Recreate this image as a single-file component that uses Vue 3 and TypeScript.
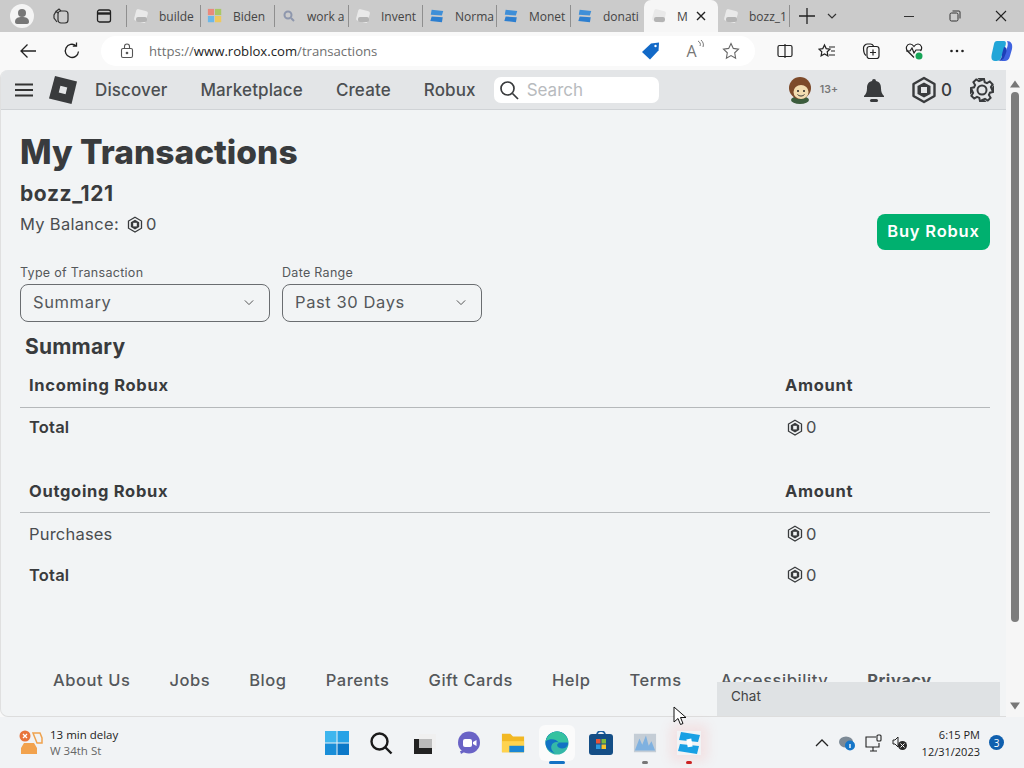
<script setup lang="ts">
const tabs = [
  { label: 'builde', kind: 'gray' },
  { label: 'Biden', kind: 'ms' },
  { label: 'work a', kind: 'search' },
  { label: 'Invent', kind: 'gray' },
  { label: 'Norma', kind: 'blue' },
  { label: 'Monet', kind: 'blue' },
  { label: 'donati', kind: 'blue' },
  { label: 'M', kind: 'gray', active: true },
  { label: 'bozz_1', kind: 'gray' },
]
const navItems = ['Discover', 'Marketplace', 'Create', 'Robux']
const footerLinks = ['About Us', 'Jobs', 'Blog', 'Parents', 'Gift Cards', 'Help', 'Terms', 'Accessibility', 'Privacy']
const sections = [
  { title: 'Incoming Robux', rows: [{ name: 'Total', strong: true }] },
  { title: 'Outgoing Robux', rows: [{ name: 'Purchases', strong: false }, { name: 'Total', strong: true }] },
]
</script>

<template>
  <div class="screen">
    <div class="tabstrip">
      <div class="profile">
        <svg width="30" height="30" viewBox="0 0 30 30"><circle cx="15" cy="15" r="12" fill="#f4f4f4"/><circle cx="15" cy="12" r="4" fill="#777"/><path d="M8 21c0-4 3-5 7-5s7 1 7 5c0 1-1 2-2 2H10c-1 0-2-1-2-2z" fill="#777"/></svg>
      </div>
      <svg class="chrome-ic first" width="20" height="20" viewBox="0 0 20 20" fill="none" stroke="#333" stroke-width="1.2"><rect x="7" y="5" width="10" height="12" rx="3"/><path d="M7 7 5 5.500 3 9v3l3 4M10 5 8 3 5 5.500"/></svg>
      <svg class="chrome-ic second" width="16" height="16" viewBox="0 0 16 16" fill="none" stroke="#222" stroke-width="1.3"><rect x="1.500" y="2" width="13" height="12" rx="2"/><path d="M1.500 5.500h13" stroke-width="2.400"/></svg>
      <div
        v-for="t in tabs"
        :key="t.label"
        class="tab"
        :class="{ active: t.active }"
      >
        <svg v-if="t.kind === 'gray'" class="fav" width="16" height="16" viewBox="0 0 16 16"><rect x="2" y="2" width="12" height="12" rx="2" fill="#e9e9e9" transform="rotate(15 8 8)"/><rect x="3" y="9" width="11" height="5" rx="2" fill="#b4b4b4"/></svg>
        <svg v-else-if="t.kind === 'ms'" class="fav" width="16" height="16" viewBox="0 0 18 18"><rect x="1" y="1" width="7" height="7" fill="#e98a7c"/><rect x="9" y="1" width="7" height="7" fill="#a9c766"/><rect x="1" y="9" width="7" height="7" fill="#6cb8e8"/><rect x="9" y="9" width="7" height="7" fill="#eec85e"/></svg>
        <svg v-else-if="t.kind === 'search'" class="fav" width="16" height="16" viewBox="0 0 16 16" fill="none" stroke="#8e97ad" stroke-width="2"><circle cx="7" cy="7" r="3.500"/><path d="m10 10 3 3"/></svg>
        <svg v-else class="fav" width="16" height="16" viewBox="0 0 18 18"><path d="M3 2 16 3.500 14.500 8.500 2 7.500z" fill="#3f8fd8"/><path d="M3 9.500 15.500 10.500 14.500 16 1.500 14.500z" fill="#2d7fd0"/></svg>
        <span class="tab-label">{{ t.label }}</span>
        <svg v-if="t.active" class="tab-close" width="12" height="12" viewBox="0 0 12 12" stroke="#222" stroke-width="1.400"><path d="m2 2 8 8M10 2l-8 8"/></svg>
      </div>
      <svg class="plus" width="18" height="18" viewBox="0 0 18 18" stroke="#222" stroke-width="1.300"><path d="M9 1v16M1 9h16"/></svg>
      <svg class="chev" width="12" height="12" viewBox="0 0 12 12" fill="none" stroke="#333" stroke-width="1.200"><path d="m2 4 4 4 4-4"/></svg>
      <div class="winbtns">
        <svg width="12" height="12" viewBox="0 0 12 12" stroke="#333"><path d="M1 6.500h10"/></svg>
        <svg width="12" height="12" viewBox="0 0 12 12" fill="none" stroke="#333"><rect x="1" y="3" width="8" height="8" rx="1.500"/><path d="M3.500 1H10a1 1 0 0 1 1 1v6.500"/></svg>
        <svg width="12" height="12" viewBox="0 0 12 12" stroke="#222" stroke-width="1.100"><path d="m1 1 10 10M11 1 1 11"/></svg>
      </div>
    </div>

    <div class="addressbar">
      <svg class="back" width="18" height="18" viewBox="0 0 18 18" fill="none" stroke="#222" stroke-width="1.300"><path d="M17 9H2M8.500 2.500 2 9l6.500 6.500"/></svg>
      <svg class="reload" width="18" height="18" viewBox="0 0 18 18" fill="none" stroke="#222" stroke-width="1.300"><path d="M15.500 9.500A6.600 6.600 0 1 1 13 3.700M13.500 0.500v3.700H9.800"/></svg>
      <div class="urlbox">
        <svg class="lock" width="14" height="16" viewBox="0 0 14 16" fill="none" stroke="#555" stroke-width="1.100"><rect x="1.500" y="5.500" width="11" height="9" rx="1.500"/><path d="M4.500 5.500V3.500a2.500 2.500 0 0 1 5 0v2"/><circle cx="7" cy="10" r=".8" fill="#555"/></svg>
        <span class="url"><span class="dim">https://</span>www.roblox.com<span class="dim">/transactions</span></span>
        <svg class="tag" width="20" height="20" viewBox="0 0 20 20"><path d="M1 11 10 2.500 18 1.500 17.500 9.500 9 18.500z" fill="#1269c7"/><circle cx="14.500" cy="5" r="1.200" fill="#fff"/></svg>
        <span class="readaloud">A<svg width="8" height="9" viewBox="0 0 8 9" fill="none" stroke="#777"><path d="M1 1c2 1 3 3 2 5M4 0c2 2 3 4 2 7"/></svg></span>
        <svg class="star" width="18" height="18" viewBox="0 0 18 18" fill="none" stroke="#666" stroke-width="1.100"><path d="m9 1.500 2.300 4.900 5.200.7-3.800 3.700.9 5.400L9 13.600l-4.600 2.600.9-5.400L1.500 7.100l5.200-.7z"/></svg>
      </div>
      <div class="tools">
        <svg width="16" height="16" viewBox="0 0 16 16" fill="none" stroke="#222" stroke-width="1.200"><rect x="1" y="2.500" width="14" height="11" rx="1.500"/><path d="M8 1v14" /></svg>
        <svg width="18" height="18" viewBox="0 0 18 18" fill="none" stroke="#222" stroke-width="1.200"><path d="m6.500 3 1.700 3.600 3.800.5-2.800 2.700.7 4-3.400-1.900-3.400 1.900.7-4L1 7.100l3.800-.5zM11 5h6M13 9h4M11 13h6"/></svg>
        <svg width="18" height="18" viewBox="0 0 18 18" fill="none" stroke="#222" stroke-width="1.200"><rect x="5" y="4.500" width="12" height="12" rx="2.500"/><path d="M11 7.500v6M8 10.500h6M4 13.500C2 12 1.500 8 1.500 6c0-2 2-4 4-4h3c1.500 0 2.500 1 3 2"/></svg>
        <svg width="18" height="18" viewBox="0 0 18 18" fill="none" stroke="#222" stroke-width="1.200"><path d="M9 15.500 2.500 9C0 6 2 2 5 2c2 0 3 1 4 2.500C10 3 11 2 13 2c3 0 5 4 2.500 7"/><path d="M1 9h4l2-3 2 5 2-3h5"/><circle cx="14" cy="14" r="3.500" fill="#18a558" stroke="none"/></svg>
        <svg width="16" height="16" viewBox="0 0 16 16" fill="#222"><circle cx="2.500" cy="8" r="1.300"/><circle cx="8" cy="8" r="1.300"/><circle cx="13.500" cy="8" r="1.300"/></svg>
        <svg width="24" height="24" viewBox="0 0 24 24"><path d="M7 2h7c3 0 2 4 0 9l-3 8c-1 3-4 3-6 3-4 0-4-4-3-8l2-9c.3-2 1.500-3 3-3z" fill="#22a6d8"/><path d="M17 2c4 0 6 3 5 8l-2 7c-1 4-3 5-6 5H9c3 0 4-2 5-5l3-8c1-3 1-5 0-7z" fill="#3f63e0"/><path d="M14 8c3 0 3 3 2 6l-2 5c-1 2-3 3-5 3 2-2 3-4 3-7z" fill="#1d3fb8"/></svg>
      </div>
    </div>

    <div class="viewport">
      <div class="page">
        <nav class="topnav">
          <svg class="burger" width="18" height="14" viewBox="0 0 18 14" fill="#333"><rect y="0.500" width="18" height="2" /><rect y="6" width="18" height="2"/><rect y="11.500" width="18" height="2"/></svg>
          <svg class="logo" width="32" height="32" viewBox="0 0 32 32"><path d="M8 2 30 7.500 24.500 30 2 24.500z" fill="#393b3d"/><rect x="12.500" y="12.500" width="7" height="7" fill="#e3e5e7" transform="rotate(14 16 16)"/></svg>
          <a v-for="n in navItems" :key="n" class="navlink">{{ n }}</a>
          <div class="search">
            <svg width="20" height="20" viewBox="0 0 20 20" fill="none" stroke="#393b3d" stroke-width="1.700"><circle cx="8.500" cy="8.500" r="6.500"/><path d="m13.500 13.500 5.500 5.500"/></svg>
            <span>Search</span>
          </div>
          <div class="nav-right">
            <svg class="avatar" width="28" height="28" viewBox="0 0 28 28"><ellipse cx="14" cy="24" rx="9" ry="4" fill="#3c5c3c"/><circle cx="14" cy="12" r="11" fill="#7d4a2a"/><ellipse cx="15" cy="16" rx="7.500" ry="7" fill="#f2dcb0"/><circle cx="12" cy="15" r="1" fill="#222"/><circle cx="18" cy="15" r="1" fill="#222"/><path d="M11.500 18.500c2 2 5 2 7 0" stroke="#333" fill="none"/></svg>
            <span class="age">13+</span>
            <svg class="bell" width="22" height="24" viewBox="0 0 22 24" fill="#393b3d"><path d="M11 1a2 2 0 0 1 2 2c4 1 5 4 5 7 0 4 1 6 3 8v1H1v-1c2-2 3-4 3-8 0-3 1-6 5-7a2 2 0 0 1 2-2z"/><rect x="7" y="21" width="8" height="3" rx="1.500"/></svg>
            <svg class="robux-lg" width="26" height="28" viewBox="0 0 26 28" fill="none"><path d="M13 2 23.500 8v12L13 26 2.500 20V8z" stroke="#393b3d" stroke-width="2.400" stroke-linejoin="round"/><path d="M13 6.500 19.500 10v8L13 21.500 6.500 18v-8z" fill="#393b3d"/><rect x="10" y="11" width="6" height="6" fill="#e3e5e7"/></svg>
            <span class="bal">0</span>
            <svg class="gear" width="26" height="26" viewBox="0 0 26 26" fill="none" stroke="#393b3d" stroke-width="2"><circle cx="13" cy="13" r="4.500"/><path d="M11 2h4l.7 3.200 2.300 1 2.800-1.700 2.800 2.800-1.700 2.800 1 2.300L24 11v4l-3.100.7-1 2.300 1.700 2.800-2.800 2.800-2.800-1.700-2.300 1L15 24h-4l-.7-3.100-2.300-1-2.800 1.700-2.800-2.800L4.100 16l-1-2.300L2 15v-4l3.100-.7 1-2.300-1.700-2.800 2.800-2.800 2.800 1.700 2.300-1z"/></svg>
          </div>
        </nav>

        <main class="content">
          <h1>My Transactions</h1>
          <div class="summary-top">
            <div>
              <div class="user">bozz_121</div>
              <div class="balance">
                My Balance:
                <span class="amount">
                  <svg class="rbx" width="16" height="17" viewBox="0 0 16 17" fill="none"><path d="M8 1.200 14.500 5v7.200L8 16 1.500 12.200V5z" stroke="#393b3d" stroke-width="1.300"/><path d="M8 3.800 12.200 6.200v4.800L8 13.400 3.800 11V6.200z" fill="#393b3d"/><rect x="6.200" y="6.800" width="3.600" height="3.600" fill="#f2f4f5"/></svg>
                  0
                </span>
              </div>
            </div>
            <button class="buy">Buy Robux</button>
          </div>

          <div class="filters">
            <div class="field type">
              <label>Type of Transaction</label>
              <div class="select"><span>Summary</span><svg width="10" height="7" viewBox="0 0 12 8" fill="none" stroke="#555" stroke-width="1.200"><path d="m1 1.500 5 5 5-5"/></svg></div>
            </div>
            <div class="field range">
              <label>Date Range</label>
              <div class="select"><span>Past 30 Days</span><svg width="10" height="7" viewBox="0 0 12 8" fill="none" stroke="#555" stroke-width="1.200"><path d="m1 1.500 5 5 5-5"/></svg></div>
            </div>
          </div>

          <h2>Summary</h2>
          <section v-for="s in sections" :key="s.title" class="tbl">
            <div class="row head"><span class="c1">{{ s.title }}</span><span class="c2">Amount</span></div>
            <div v-for="r in s.rows" :key="r.name" class="row">
              <span class="c1" :class="{ strong: r.strong }">{{ r.name }}</span>
              <span class="c2 amount cell-amount">
                <svg class="rbx" width="16" height="17" viewBox="0 0 16 17" fill="none"><path d="M8 1.200 14.500 5v7.200L8 16 1.500 12.200V5z" stroke="#393b3d" stroke-width="1.300"/><path d="M8 3.800 12.200 6.200v4.800L8 13.400 3.800 11V6.200z" fill="#393b3d"/><rect x="6.200" y="6.800" width="3.600" height="3.600" fill="#f2f4f5"/></svg>
                0
              </span>
            </div>
          </section>

          <footer class="foot">
            <a v-for="f in footerLinks" :key="f" :class="{ bold: f === 'Privacy' }">{{ f }}</a>
          </footer>
        </main>

        <div class="chat">Chat</div>
      </div>
      <div class="scrollbar">
        <svg width="10" height="8" viewBox="0 0 10 8" fill="#777"><path d="M5 0.500 10 7.500H0z"/></svg>
        <div class="thumb"></div>
        <svg width="10" height="8" viewBox="0 0 10 8" fill="#777"><path d="M5 7.500 0 0.500h10z"/></svg>
      </div>
    </div>

    <div class="taskbar">
      <div class="traffic">
        <svg width="26" height="28" viewBox="0 0 26 28"><circle cx="7" cy="7" r="5.500" fill="#e8743b"/><path d="m5 5 4 4M9 5l-4 4" stroke="#fff" stroke-width="1.300"/><path d="M15 4h7l2 5v5h-5l-2-5z" fill="none" stroke="#efa24e" stroke-width="1.500"/><path d="M3 19l3-5h10l3 5v6H3z" fill="#f2a24d"/></svg>
        <div class="traffic-text"><span>13 min delay</span><span class="gray">W 34th St</span></div>
      </div>
      <div class="apps">
        <svg width="24" height="24" viewBox="0 0 24 24"><rect width="11.500" height="11.500" fill="#3fb6ee"/><rect x="12.500" width="11.500" height="11.500" fill="#28a2e6"/><rect y="12.500" width="11.500" height="11.500" fill="#1a8ed8"/><rect x="12.500" y="12.500" width="11.500" height="11.500" fill="#0c78c8"/></svg>
        <svg width="24" height="24" viewBox="0 0 24 24" fill="none" stroke="#1a1a1a" stroke-width="2.400"><circle cx="10.500" cy="10.500" r="8"/><path d="m16.500 16.500 6 6"/></svg>
        <svg width="24" height="24" viewBox="0 0 24 24"><rect x="6" y="3" width="17" height="15" fill="#f0f0f0"/><rect x="1" y="8" width="18" height="15" fill="#222"/><rect x="6" y="8" width="13" height="9" fill="#bbb"/></svg>
        <svg width="24" height="24" viewBox="0 0 24 24"><circle cx="12" cy="11.500" r="11" fill="#6a63c6"/><path d="M3 20h6l-5 3z" fill="#6a63c6"/><rect x="6" y="8" width="9" height="8" rx="2" fill="#fff"/><path d="m16 11 3.500-2v6L16 13z" fill="#fff"/></svg>
        <svg width="24" height="24" viewBox="0 0 26 24"><path d="M1 2h9l3 3h12v17H1z" fill="#f2b824"/><path d="M1 10h24v12H1z" fill="#ffd34e"/><path d="M9 15h16v7H9z" fill="#1a86d4"/></svg>
        <div class="app-cell current">
          <svg width="24" height="24" viewBox="0 0 26 26"><circle cx="13" cy="13" r="12.500" fill="#35b8a8"/><path d="M25 14c-1 5-7 6-10 4-3-2-2-5 1-5-3-2-8-1-9 3-1 3 1 7 4 8C5 23 .5 18 .5 13 .5 6 6 .5 13 .5c7 0 12 5 12 13.500z" fill="#1272c4"/><path d="M.8 11C2 5 7 .5 13 .5c7 0 12 6 12 12H15c-3-4-9-5-14.200-1.500z" fill="#35c2a0"/></svg>
          <i class="run blue"></i>
        </div>
        <svg width="24" height="24" viewBox="0 0 24 24"><path d="M8 4a4 4 0 0 1 8 0" fill="none" stroke="#1b5fa0" stroke-width="1.800"/><rect y="3" width="24" height="21" rx="3" fill="#144e86"/><rect x="7" y="8" width="4.500" height="4.500" fill="#e8553a"/><rect x="12.500" y="8" width="4.500" height="4.500" fill="#7cba3c"/><rect x="7" y="13.500" width="4.500" height="4.500" fill="#2b9ae0"/><rect x="12.500" y="13.500" width="4.500" height="4.500" fill="#f4c22c"/></svg>
        <div class="app-cell">
          <svg width="24" height="24" viewBox="0 0 26 24"><rect x="1" y="2" width="24" height="20" fill="#c4cdd6"/><path d="M2 20 7 7l3 7 4-10 3 11 3-5 4 10z" fill="#7fb1e0"/></svg>
          <i class="run gray"></i>
        </div>
        <div class="app-cell rbx-app">
          <svg width="24" height="24" viewBox="0 0 24 24"><path d="M4 1 23 4 21 11 2 9z" fill="#19a0e4"/><path d="M3 13 22 15 20 23 1 20z" fill="#19a0e4"/><rect x="10" y="8" width="5" height="8" fill="#fff" transform="rotate(-10 12 12)"/></svg>
          <i class="run red"></i>
        </div>
      </div>
      <div class="tray">
        <svg width="14" height="10" viewBox="0 0 14 10" fill="none" stroke="#222" stroke-width="1.300"><path d="m1 8 6-6 6 6"/></svg>
        <svg width="18" height="16" viewBox="0 0 18 16"><ellipse cx="8" cy="7" rx="7" ry="5.500" fill="#7d8a96"/><circle cx="12" cy="10.500" r="5" fill="#1676c8"/><rect x="11.300" y="9" width="1.400" height="4" fill="#fff"/></svg>
        <svg width="18" height="18" viewBox="0 0 18 18" fill="none" stroke="#222" stroke-width="1.100"><path d="M11 3H1v10h13V9M5 17h7M8 13v4"/><rect x="12" y="1" width="4" height="6" rx="1"/></svg>
        <svg width="16" height="16" viewBox="0 0 16 16"><path d="M1 5h2l3-3v10L3 9H1z" fill="none" stroke="#222"/><circle cx="10.500" cy="10.500" r="4.500" fill="#2a2a2a"/><path d="m8.500 8.500 4 4M12.500 8.500l-4 4" stroke="#fff"/></svg>
        <div class="clock"><span>6:15 PM</span><span>12/31/2023</span></div>
        <span class="notif">3</span>
      </div>
    </div>

    <svg class="cursor" width="14" height="20" viewBox="0 0 14 20"><path d="M1 1v15l4-3.500 2.500 6 2.500-1-2.500-6H13z" fill="#fff" stroke="#111" stroke-width="1"/></svg>
  </div>
</template>

<style scoped>
.screen { width: 1024px; height: 768px; display: flex; flex-direction: column; overflow: hidden; background: #f3f3f3; font-family: "Liberation Sans", Arial, sans-serif; color: #393b3d; position: relative; }

.tabstrip { height: 32px; background: #cbcbcb; display: flex; align-items: center; flex: none; position: relative; }
.profile { width: 44px; display: flex; justify-content: center; margin-right: 7px; }
.chrome-ic.first { margin-right: 25px; }
.chrome-ic.second { margin-right: 14px; }
.tab { width: 74px; height: 32px; flex: none; display: flex; align-items: center; padding: 0 2px 0 7px; gap: 10px; box-sizing: border-box; position: relative; }
.tab::before { content: ""; position: absolute; left: 0; top: 5px; bottom: 5px; width: 1px; background: #8f8f8f; }
.tab.active { background: #f6f6f6; border-radius: 7px 7px 0 0; }
.tab.active::before, .tab.active + .tab::before { display: none; }
.tab.active + .tab { width: 72px; border-right: 1px solid #8f8f8f; height: 22px; padding-left: 5px; gap: 10px; }
.fav { flex: none; }
.tab-label { font-family: "Open Sans", sans-serif; font-size: 12px; color: #444; white-space: nowrap; flex: 1; min-width: 0; }
.tab.active .tab-label { flex: none; width: 12px; }
.tab-close { flex: none; margin-left: -4px; }
.plus { margin-left: 8px; flex: none; }
.chev { margin-left: 10px; flex: none; }
.winbtns { margin-left: auto; width: 121px; display: flex; justify-content: space-between; padding-right: 17px; box-sizing: border-box; }

.addressbar { height: 38px; background: #f9f9f9; display: flex; align-items: center; flex: none; }
.back { margin-left: 19px; }
.reload { margin-left: 26px; }
.urlbox { margin-left: 20px; width: 654px; height: 30px; background: #fff; border-radius: 15px; display: flex; align-items: center; box-sizing: border-box; padding-left: 19px; flex: none; }
.url { font-family: "Open Sans", sans-serif; font-size: 13.150px; margin-left: 15px; color: #222; white-space: nowrap; }
.dim { color: #6f6f6f; }
.tag { margin-left: 264px; flex: none; }
.readaloud { margin-left: 25px; font-family: "Open Sans", sans-serif; font-size: 16px; color: #777; display: flex; width: 20px; }
.star { margin-left: 16px; }
.tools { flex: 1; display: flex; justify-content: space-between; align-items: center; padding: 0 10px 0 22px; }

.viewport { flex: 1; min-height: 0; display: flex; background: #f9f9f9; }
.page { flex: 1; min-width: 0; position: relative; overflow: hidden; background: #f2f4f5; border-left: 1px solid #e0e0e0; border-bottom: 1px solid #ddd; border-radius: 8px 0 0 8px; font-family: Inter, "Open Sans", sans-serif; }
.topnav { background: #e3e5e7; border-bottom: 1px solid #d0d3d6; display: flex; align-items: center; box-sizing: border-box; height: 40px; }
.burger { margin-left: 14px; flex: none; }
.logo { margin-left: 14px; margin-right: 16px; flex: none; }
.navlink { font-size: 17px; font-weight: 500; color: #4c4f52; margin-right: 33px; white-space: nowrap; letter-spacing: 0.12px; }
.search { width: 165px; height: 26px; background: #fff; border-radius: 7px; display: flex; align-items: center; gap: 8px; padding-left: 5px; box-sizing: border-box; margin-left: -15px; color: #b8bbbe; font-size: 17px; }
.nav-right { margin-left: auto; display: flex; align-items: center; padding-right: 11px; }
.avatar { margin-right: 6px; }
.age { font-size: 10.500px; font-weight: 600; color: #777; margin-right: 25px; }
.bell { margin-right: 26px; }
.robux-lg { margin-right: 4px; }
.bal { font-size: 17px; font-weight: 500; margin-right: 17px; }

.content { padding: 0 16px 0 19px; }
h1 { margin: 0; padding-top: 21px; font-size: 33.500px; line-height: 42px; font-weight: 800; color: #393b3d; }
.summary-top { display: flex; justify-content: space-between; align-items: flex-end; margin-top: 7px; }
.user { font-size: 21px; font-weight: 700; line-height: 28px; letter-spacing: 0.6px; }
.balance { font-size: 16.500px; line-height: 24px; margin-top: 4px; display: flex; align-items: center; gap: 8px; margin-bottom: 14px; color: #4a4d50; letter-spacing: 0.3px; }
.amount { display: inline-flex; align-items: center; gap: 3px; }
.cell-amount { margin-left: 2px; }
.rbx { flex: none; }
.buy { width: 113px; height: 36px; background: #00b06f; color: #fff; border: 0; border-radius: 8px; font: 600 16.500px Inter, "Open Sans", sans-serif; letter-spacing: 0.8px; padding: 0 0 2px; }
.filters { display: flex; gap: 12px; margin-top: 14px; }
.field label { display: block; font-size: 12.500px; line-height: 17px; color: #55585b; margin-bottom: 3px; letter-spacing: 0.3px; }
.type { width: 250px; }
.range { width: 200px; }
.select { height: 38px; border: 1px solid #6a6d70; border-radius: 8px; display: flex; align-items: center; justify-content: space-between; padding: 0 15px 2px 12px; font-size: 16.500px; font-weight: 400; color: #55585b; box-sizing: border-box; letter-spacing: 0.6px; }
h2 { margin: 12px 0 0 5px; font-size: 21px; line-height: 26px; font-weight: 700; letter-spacing: 0.2px; }
.tbl { margin-top: 11px; }
.tbl + .tbl { margin-top: 31px; }
.row { display: flex; align-items: center; height: 41px; padding-left: 9px; font-size: 16.500px; color: #4a4d50; letter-spacing: 0.2px; }
.tbl:first-of-type .row:not(.head) { height: 38px; }
.strong { font-weight: 600; color: #393b3d; }
.row.head { height: 28px; padding-bottom: 8px; border-bottom: 1px solid #b5b8ba; font-weight: 700; color: #393b3d; letter-spacing: 0.7px; }
.tbl + .tbl .row.head { height: 27px; }
.c1 { width: 756px; }
.c2 { display: inline-flex; }
.foot { display: flex; gap: 39px; padding-left: 33px; margin-top: 75px; font-size: 16.500px; font-weight: 500; color: #55585b; white-space: nowrap; letter-spacing: 0.56px; }
.foot .bold { font-weight: 700; }
.chat { position: absolute; left: 716px; bottom: 0; width: 283px; height: 34px; background: #dfe2e4; box-sizing: border-box; padding: 6px 14px; font-size: 13.500px; color: #444; }

.scrollbar { width: 18px; flex: none; display: flex; flex-direction: column; align-items: center; justify-content: space-between; padding: 10px 0 7px; box-sizing: border-box; background: #f6f6f6; }
.thumb { width: 8px; flex: 1; margin: 4px 0 80px; background: #7d7d7d; border-radius: 4px; }

.taskbar { height: 51px; background: #f1f3f5; flex: none; display: flex; align-items: center; position: relative; }
.traffic { display: flex; align-items: center; gap: 6px; margin-left: 18px; width: 305px; }
.traffic-text { display: flex; flex-direction: column; font-family: "Open Sans", sans-serif; font-size: 11.500px; line-height: 16px; color: #222; }
.gray { color: #666; }
.apps { display: flex; align-items: center; gap: 20px; margin-left: 2px; }
.app-cell { position: relative; display: flex; }
.run { position: absolute; left: 50%; bottom: -9px; width: 6px; height: 3px; margin-left: -3px; border-radius: 2px; }
.run.blue { background: #1272c4; width: 16px; margin-left: -8px; }
.run.gray { background: #777; }
.run.red { background: #c22; }
.current { background: #fbfbfb; box-shadow: 0 0 0 6px #fbfbfb; border-radius: 2px; }
.rbx-app { box-shadow: 0 0 12px 6px rgba(255, 120, 120, 0.15); }
.tray { margin-left: auto; display: flex; align-items: center; gap: 9px; padding-right: 20px; }
.clock { display: flex; flex-direction: column; align-items: flex-end; font-family: "Open Sans", sans-serif; font-size: 11px; line-height: 17px; color: #222; margin-left: 5px; }
.notif { width: 15px; height: 15px; border-radius: 50%; background: #0f5fae; color: #fff; font: 10px "Open Sans", sans-serif; display: flex; align-items: center; justify-content: center; }
.cursor { position: absolute; left: 673px; top: 706px; }
</style>
